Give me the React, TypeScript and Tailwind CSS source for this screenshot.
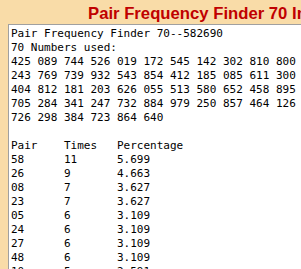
import React from "react";

const lines = [
  "Pair Frequency Finder 70--582690",
  "70 Numbers used:",
  "425 089 744 526 019 172 545 142 302 810 800",
  "243 769 739 932 543 854 412 185 085 611 300",
  "404 812 181 203 626 055 513 580 652 458 895",
  "705 284 341 247 732 884 979 250 857 464 126",
  "726 298 384 723 864 640",
  "",
  "Pair    Times   Percentage",
  "58      11      5.699",
  "26      9       4.663",
  "08      7       3.627",
  "23      7       3.627",
  "05      6       3.109",
  "24      6       3.109",
  "27      6       3.109",
  "48      6       3.109",
  "10      5       2.591",
];

export default function App() {
  return (
    <div className="w-[301px] h-[269px] overflow-hidden bg-[#f9dca8]">
      <div
        className="w-[400px] pl-[88px] pt-[5px] h-[24px] overflow-hidden whitespace-nowrap text-[16.7px] leading-[17px] font-bold text-[#c00000]"
        style={{ fontFamily: '"Liberation Sans", Arial, sans-serif' }}
      >
        Pair Frequency Finder 70 Interface
      </div>
      <div className="ml-[8px] w-[400px] h-[300px] bg-white border-l border-t border-[#a0a0a0] pl-[2px] pt-[2px]">
        <pre className="text-[11px] leading-[14px] text-black" style={{ fontFamily: '"DejaVu Sans Mono", monospace' }}>
          {lines.join("\n")}
        </pre>
      </div>
    </div>
  );
}
